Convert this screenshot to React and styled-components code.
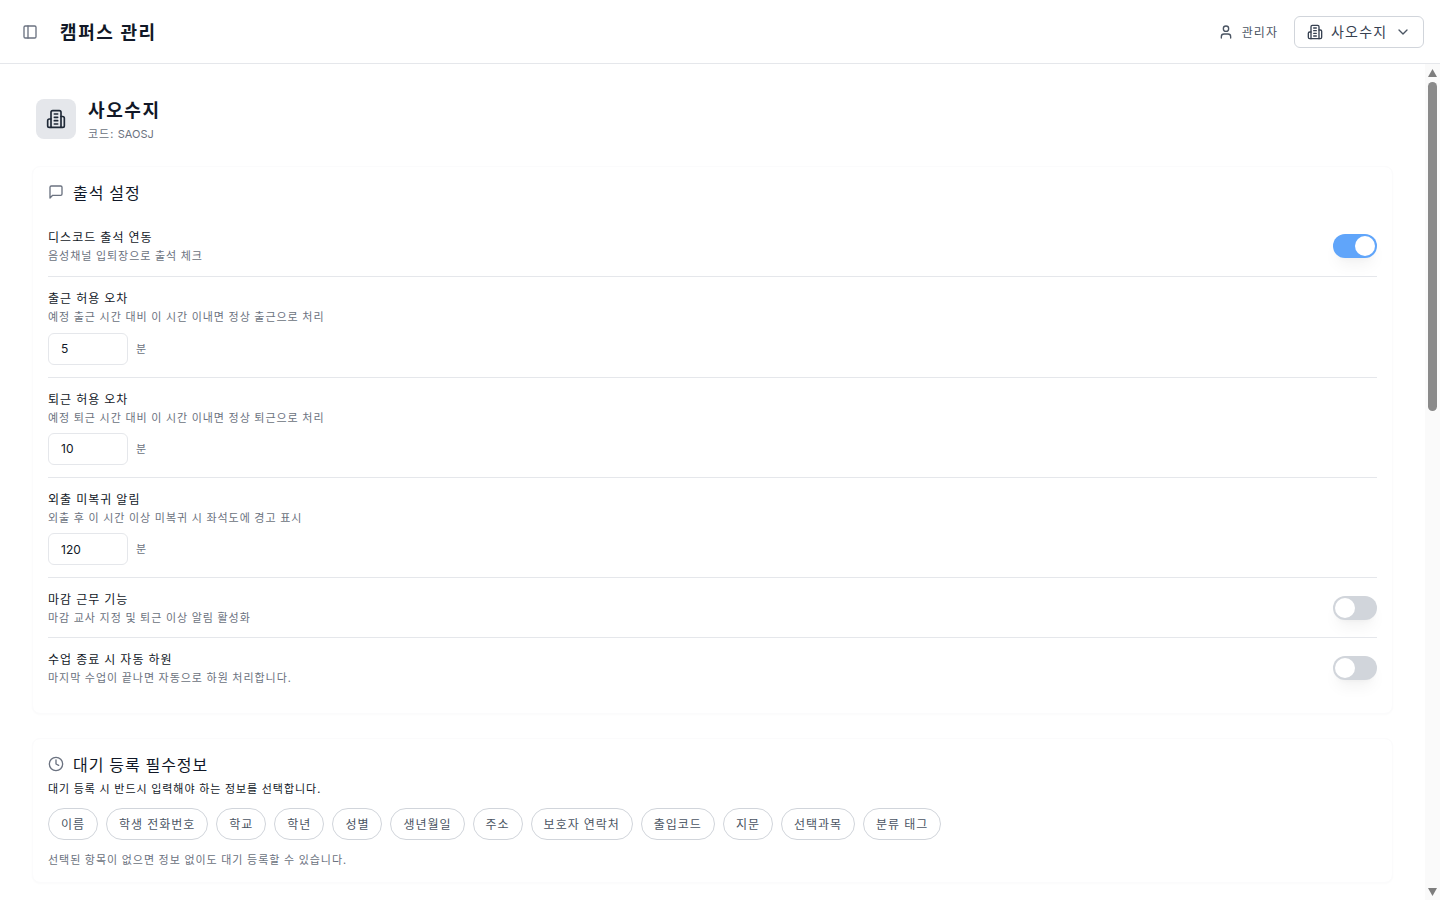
import styled, { createGlobalStyle } from "styled-components";

const GlobalStyle = createGlobalStyle`
  * {
    box-sizing: border-box;
  }
  html, body {
    margin: 0;
    height: 100%;
    overflow: hidden;
    background: #ffffff;
  }
  body {
    font-family: "Noto Sans CJK KR", Inter, "Liberation Sans", sans-serif;
    color: #0b1220;
  }
`;

// hangul in Noto is 0.92em wide, the reference font is a full em
const Hangul = "letter-spacing: 0.087em; word-spacing: 0.02em;";

const Shell = styled.div`
  display: flex;
  flex-direction: column;
  height: 900px;
`;
const Header = styled.header`
  flex: none;
  height: 64px;
  display: flex;
  align-items: center;
  justify-content: space-between;
  padding: 0 16px 0 22px;
  border-bottom: 1px solid #e5e7eb;
`;
const HeaderLeft = styled.div`
  display: flex;
  align-items: center;
  gap: 22px;
`;
const IconButton = styled.button`
  display: flex;
  padding: 0;
  border: none;
  background: none;
  color: #6b7280;
`;
const PageTitle = styled.h1`
  margin: 0 0 2px;
  font-size: 18px;
  line-height: 28px;
  font-weight: 700;
  color: #111827;
  ${Hangul}
`;
const HeaderRight = styled.div`
  display: flex;
  align-items: center;
  gap: 16px;
`;
const UserBox = styled.div`
  display: flex;
  align-items: center;
  gap: 8px;
  font-size: 12px;
  color: #4b5563;
  ${Hangul}
`;
const Icon = styled.svg`
  flex: none;
  fill: none;
  stroke: currentColor;
  stroke-width: 2;
  stroke-linecap: round;
  stroke-linejoin: round;
`;
const CampusSelect = styled.button`
  width: 130px;
  height: 32px;
  display: flex;
  align-items: center;
  gap: 8px;
  padding: 0 14px 2px 12px;
  background: #ffffff;
  border: 1px solid #d1d5db;
  border-radius: 6px;
  font-family: inherit;
  font-size: 14px;
  color: #374151;
  white-space: nowrap;
  ${Hangul}
  svg {
    margin-top: 2px;
  }
`;
const ChevronWrap = styled.span`
  display: flex;
  margin-left: auto;
  color: #4b5563;
`;
const Body = styled.div`
  flex: 1;
  min-height: 0;
  display: flex;
`;
const Main = styled.main`
  flex: 1;
  min-width: 0;
  overflow-y: auto;
  background: #ffffff;
`;
const ScrollRail = styled.div`
  flex: none;
  width: 15px;
  display: flex;
  flex-direction: column;
  align-items: center;
  background: #fafafa;
`;
const ScrollArrow = styled.svg`
  flex: none;
  width: 9px;
  height: 8px;
  margin: ${(props) => (props.$down ? "auto 0 4px" : "5px 0 0")};
  fill: #7d7d7d;
`;
const ScrollThumb = styled.div`
  flex: none;
  width: 9px;
  height: 329px;
  margin-top: 5px;
  border-radius: 5px;
  background: #8a8a8a;
`;
const Page = styled.div`
  padding: 35px 32px 32px;
`;
const CampusHead = styled.div`
  display: flex;
  align-items: flex-start;
  gap: 12px;
  padding-left: 4px;
  margin-bottom: 24px;
`;
const CampusBadge = styled.div`
  width: 40px;
  height: 40px;
  display: flex;
  align-items: center;
  justify-content: center;
  border-radius: 8px;
  background: #e5e7eb;
  color: #1f2937;
`;
const CampusName = styled.h2`
  margin: 0 0 6px;
  font-size: 18px;
  line-height: 20px;
  font-weight: 700;
  color: #111827;
  ${Hangul}
`;
const CampusCode = styled.p`
  margin: 0;
  font-size: 11px;
  line-height: 16px;
  color: #6b7280;
  ${Hangul}
`;
const Latin = styled.span`
  font-family: Inter, "Liberation Sans", sans-serif;
  letter-spacing: 0;
`;
const Card = styled.section`
  padding: 13px 15px 15px;
  margin-bottom: 24px;
  background: #ffffff;
  border: 1px solid #fbfbfc;
  border-radius: 8px;
  box-shadow: 0 1px 2px rgba(0, 0, 0, 0.02);
`;
const CardTitle = styled.h3`
  display: flex;
  align-items: center;
  gap: 9px;
  margin: 0;
  font-size: 16px;
  line-height: 24px;
  font-weight: 400;
  color: #111827;
  letter-spacing: 0.06em;
  word-spacing: 0.02em;
  svg {
    color: #6b7280;
  }
`;
const Rows = styled.div`
  margin-top: 12px;
`;
const Row = styled.div`
  padding: 12px 0;
  border-bottom: 1px solid #e5e7eb;
  &:first-child {
    padding-bottom: 13px;
  }
  &:last-child {
    border-bottom: none;
  }
`;
const RowHead = styled.div`
  display: flex;
  align-items: center;
  justify-content: space-between;
`;
const Label = styled.div`
  font-size: 12px;
  line-height: 18px;
  color: #111827;
  ${Hangul}
`;
const Hint = styled.div`
  margin-top: 1px;
  font-size: 11px;
  line-height: 16.3px;
  color: #6b7280;
  ${Hangul}
`;
const InputRow = styled.div`
  display: flex;
  align-items: center;
  gap: 8px;
  margin-top: 8px;
`;
const NumberInput = styled.input`
  width: 80px;
  height: 32px;
  padding: 0 12px;
  border: 1px solid #e5e7eb;
  border-radius: 6px;
  background: #ffffff;
  font-family: Inter, "Liberation Sans", sans-serif;
  font-size: 12px;
  color: #111827;
  outline: none;
`;
const Unit = styled.span`
  margin-bottom: 2px;
  font-size: 11px;
  color: #6b7280;
  ${Hangul}
`;
const Toggle = styled.span`
  position: relative;
  flex: none;
  width: 44px;
  height: 24px;
  border-radius: 12px;
  background: ${(props) => (props.$on ? "#60a5fa" : "#d1d5db")};
  box-shadow: 0 10px 15px -3px rgba(0, 0, 0, 0.05), 0 4px 6px -4px rgba(0, 0, 0, 0.05);
`;
const Knob = styled.span`
  position: absolute;
  top: 2px;
  left: ${(props) => (props.$on ? "22px" : "2px")};
  width: 20px;
  height: 20px;
  border-radius: 50%;
  background: #ffffff;
`;
const Desc = styled.p`
  margin: 4px 0 0;
  font-size: 11px;
  line-height: 16px;
  color: #111827;
  ${Hangul}
`;
const Chips = styled.div`
  display: flex;
  flex-wrap: wrap;
  gap: 8px;
  margin-top: 12px;
`;
const Chip = styled.button`
  height: 32px;
  padding: 0 12px 1px;
  background: #ffffff;
  border: 1px solid #d1d5db;
  border-radius: 16px;
  font-family: inherit;
  font-size: 12px;
  color: #4b5563;
  letter-spacing: 0.082em;
  word-spacing: 0.03em;
`;
const Note = styled.p`
  margin: 11px 0 0;
  font-size: 11px;
  line-height: 16px;
  color: #6b7280;
  ${Hangul}
`;

const PanelIcon = () => (
  <Icon width="16" height="16" viewBox="0 0 24 24">
    <rect x="3" y="3" width="18" height="18" rx="2" />
    <path d="M9 3v18" />
  </Icon>
);
const BuildingIcon = ({ size = 16 }) => (
  <Icon width={size} height={size} viewBox="0 0 24 24">
    <path d="M6 22V4a2 2 0 0 1 2-2h8a2 2 0 0 1 2 2v18Z" />
    <path d="M6 12H4a2 2 0 0 0-2 2v6a2 2 0 0 0 2 2h2" />
    <path d="M18 9h2a2 2 0 0 1 2 2v9a2 2 0 0 1-2 2h-2" />
    <path d="M10 6h4" />
    <path d="M10 10h4" />
    <path d="M10 14h4" />
    <path d="M10 18h4" />
  </Icon>
);
const UserIcon = () => (
  <Icon width="16" height="16" viewBox="0 0 24 24">
    <path d="M19 21v-2a4 4 0 0 0-4-4H9a4 4 0 0 0-4 4v2" />
    <circle cx="12" cy="7" r="4" />
  </Icon>
);
const ChevronIcon = () => (
  <Icon width="16" height="16" viewBox="0 0 24 24">
    <path d="m6 9 6 6 6-6" />
  </Icon>
);
const MessageIcon = () => (
  <Icon width="16" height="16" viewBox="0 0 24 24">
    <path d="M21 15a2 2 0 0 1-2 2H7l-4 4V5a2 2 0 0 1 2-2h14a2 2 0 0 1 2 2z" />
  </Icon>
);
const ClockIcon = () => (
  <Icon width="16" height="16" viewBox="0 0 24 24">
    <circle cx="12" cy="12" r="10" />
    <path d="M12 6v6l4 2" />
  </Icon>
);

const settings = [
  { label: "디스코드 출석 연동", hint: "음성채널 입퇴장으로 출석 체크", on: true },
  { label: "출근 허용 오차", hint: "예정 출근 시간 대비 이 시간 이내면 정상 출근으로 처리", value: 5 },
  { label: "퇴근 허용 오차", hint: "예정 퇴근 시간 대비 이 시간 이내면 정상 퇴근으로 처리", value: 10 },
  { label: "외출 미복귀 알림", hint: "외출 후 이 시간 이상 미복귀 시 좌석도에 경고 표시", value: 120 },
  { label: "마감 근무 기능", hint: "마감 교사 지정 및 퇴근 이상 알림 활성화", on: false },
  { label: "수업 종료 시 자동 하원", hint: "마지막 수업이 끝나면 자동으로 하원 처리합니다.", on: false },
];

const fields = [
  "이름",
  "학생 전화번호",
  "학교",
  "학년",
  "성별",
  "생년월일",
  "주소",
  "보호자 연락처",
  "출입코드",
  "지문",
  "선택과목",
  "분류 태그",
];

const App = () => {
  return (
    <Shell>
      <GlobalStyle />
      <Header>
        <HeaderLeft>
          <IconButton>
            <PanelIcon />
          </IconButton>
          <PageTitle>캠퍼스 관리</PageTitle>
        </HeaderLeft>
        <HeaderRight>
          <UserBox>
            <UserIcon />
            관리자
          </UserBox>
          <CampusSelect>
            <BuildingIcon />
            사오수지
            <ChevronWrap>
              <ChevronIcon />
            </ChevronWrap>
          </CampusSelect>
        </HeaderRight>
      </Header>
      <Body>
        <Main>
          <Page>
            <CampusHead>
              <CampusBadge>
                <BuildingIcon size={20} />
              </CampusBadge>
              <div>
                <CampusName>사오수지</CampusName>
                <CampusCode>
                  코드: <Latin>SAOSJ</Latin>
                </CampusCode>
              </div>
            </CampusHead>
            <Card>
              <CardTitle>
                <MessageIcon />
                출석 설정
              </CardTitle>
              <Rows>
                {settings.map((item) => (
                  <Row key={item.label}>
                    <RowHead>
                      <div>
                        <Label>{item.label}</Label>
                        <Hint>{item.hint}</Hint>
                      </div>
                      {item.on !== undefined && (
                        <Toggle $on={item.on}>
                          <Knob $on={item.on} />
                        </Toggle>
                      )}
                    </RowHead>
                    {item.value !== undefined && (
                      <InputRow>
                        <NumberInput defaultValue={item.value} />
                        <Unit>분</Unit>
                      </InputRow>
                    )}
                  </Row>
                ))}
              </Rows>
            </Card>
            <Card>
              <CardTitle>
                <ClockIcon />
                대기 등록 필수정보
              </CardTitle>
              <Desc>대기 등록 시 반드시 입력해야 하는 정보를 선택합니다.</Desc>
              <Chips>
                {fields.map((field) => (
                  <Chip key={field}>{field}</Chip>
                ))}
              </Chips>
              <Note>선택된 항목이 없으면 정보 없이도 대기 등록할 수 있습니다.</Note>
            </Card>
          </Page>
        </Main>
        <ScrollRail>
          <ScrollArrow viewBox="0 0 9 8">
            <path d="M4.5 0 9 8H0z" />
          </ScrollArrow>
          <ScrollThumb />
          <ScrollArrow $down viewBox="0 0 9 8">
            <path d="M0 0h9L4.5 8z" />
          </ScrollArrow>
        </ScrollRail>
      </Body>
    </Shell>
  );
};

export default App;
